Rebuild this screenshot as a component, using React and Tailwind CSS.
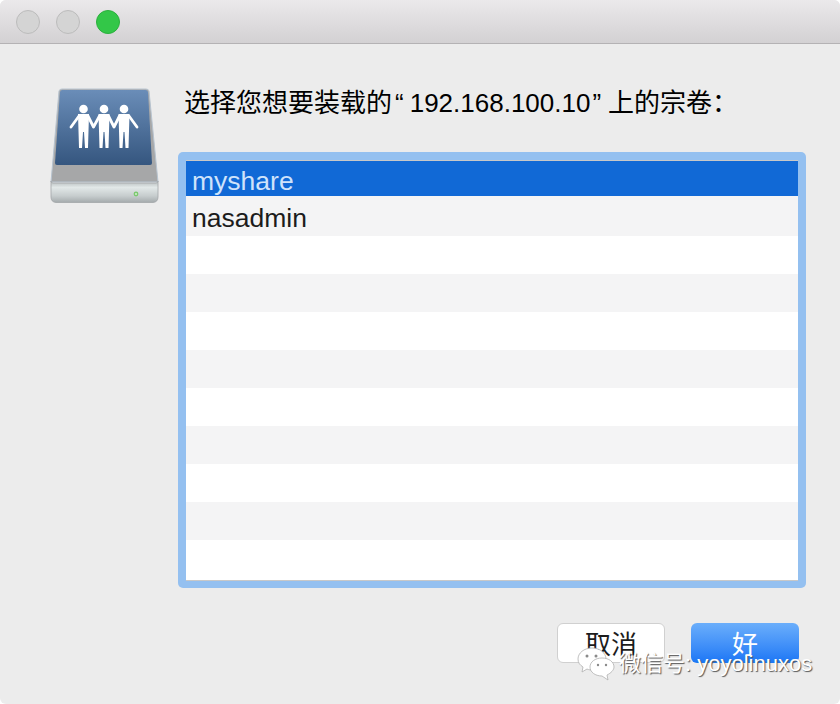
const cjk = { fontFamily: '"Liberation Sans", "Noto Sans CJK SC", sans-serif' };

const rows = ["myshare", "nasadmin", "", "", "", "", "", "", "", "", ""];

const rowClass = (i) => {
  if (i === 0) return "h-[35px] pt-[7px] px-[6px] flex items-center text-[26.5px] text-[#cfe3fb] bg-[#1169d6]";
  if (i === 1) return "h-[40px] pt-[5px] px-[6px] flex items-center text-[26.5px] text-[#1c1c1c] bg-[#f4f4f5]";
  return i % 2 === 1 ? "h-[38px] bg-[#f4f4f5]" : "h-[38px] bg-white";
};

const DriveIcon = () => (
  <svg width="110" height="120" viewBox="0 0 110 120" className="block">
    <defs>
      <linearGradient id="face" x1="0" y1="0" x2="0" y2="1">
        <stop offset="0" stopColor="#6a8db8" />
        <stop offset="1" stopColor="#35567f" />
      </linearGradient>
      <linearGradient id="front" x1="0" y1="0" x2="0" y2="1">
        <stop offset="0" stopColor="#b4babb" />
        <stop offset="0.3" stopColor="#e2e8e8" />
        <stop offset="0.7" stopColor="#c6cccd" />
        <stop offset="1" stopColor="#a4aaac" />
      </linearGradient>
    </defs>
    <path d="M9 3 Q9.500 1 12 1 H96 Q98.500 1 99 3 L108 94 H1 Z" fill="#a6a7a8" stroke="#b8c4d0" strokeWidth="1" />
    <path d="M10 4 Q10.500 2 12.500 2 H95.500 Q97.500 2 98 4 L102 75 Q102 77 100 77 H7 Q5 77 5 75 Z" fill="url(#face)" />
    <path d="M1 93 Q1 95 3 95 H106 Q108 95 108 93 V109 Q108 114 103 114.500 H6 Q1 114 1 109 Z" fill="url(#front)" stroke="#a2a6a8" strokeWidth="0.800" />
    <circle cx="86" cy="106" r="2.400" fill="#7bc96f" />
    <circle cx="86" cy="106" r="0.900" fill="#dff3da" />
    <g fill="#fff">
      <circle cx="33.500" cy="21" r="4.300" />
      <circle cx="54" cy="21" r="4.300" />
      <circle cx="74" cy="21" r="4.300" />
      <path d="M28 26 H39 L38 60 H35 L34 44 H33 L32 60 H29 Z" />
      <path d="M48.500 26 H59.500 L58.500 60 H55.500 L54.500 44 H53.500 L52.500 60 H49.500 Z" />
      <path d="M68.500 26 H79.500 L78.500 60 H75.500 L74.500 44 H73.500 L72.500 60 H69.500 Z" />
    </g>
    <path
      d="M29 28 L21 39 M38 28 L43.500 39 L49.500 28 M58.500 28 L64 39 L69.500 28 M79 28 L87 39"
      fill="none"
      stroke="#fff"
      strokeWidth="2.800"
      strokeLinecap="round"
      strokeLinejoin="round"
    />
  </svg>
);

const WechatMark = () => (
  <svg width="38" height="34" viewBox="0 0 38 34" className="block">
    <g fill="#fff" stroke="#b0b0b0" strokeWidth="0.800">
      <path d="M15 1 C7 1 1 6 1 12 C1 16 3 18 6 20 L5 25 L10 22 C12 23 14 23 16 23 C22 23 29 18 29 12 C29 6 23 1 15 1 Z" />
      <path d="M25 11 C18 11 13 15 13 20 C13 25 18 29 25 29 L31 33 L30 28 C34 26 37 23 37 20 C37 15 32 11 25 11 Z" />
    </g>
    <g fill="#8a8a8a">
      <circle cx="10" cy="9" r="1.500" />
      <circle cx="19" cy="9" r="1.500" />
      <circle cx="21" cy="18" r="1.200" />
      <circle cx="29" cy="18" r="1.200" />
    </g>
  </svg>
);

export default function App() {
  return (
    <div className="w-[840px] h-[704px] overflow-hidden bg-white">
      <div className="relative w-[840px] h-[704px] overflow-hidden rounded-[6px] bg-[#ececec]" style={cjk}>
        {/* Title bar */}
        <div className="h-[44px] flex items-center gap-4 pl-4 bg-gradient-to-b from-[#ebe9eb] to-[#d3d1d3] border-b border-[#b4b2b4]">
          <div className="w-6 h-6 rounded-full bg-[#d4d4d4] border border-[#bcbcbc]" />
          <div className="w-6 h-6 rounded-full bg-[#d4d4d4] border border-[#bcbcbc]" />
          <div className="w-6 h-6 rounded-full bg-[#33c748] border border-[#2bb03d]" />
        </div>

        {/* Body */}
        <div className="flex pl-[50px] pt-[44px]">
          <div className="w-[128px] shrink-0">
            <DriveIcon />
          </div>
          <div className="w-[628px]">
            <h1 className="text-[26px] leading-[32px] font-normal text-black -mt-[1px] ml-[6px] whitespace-nowrap">
              选择您想要装载的<span className="ml-[3px] mr-[6px]">“</span>
              <span>192.168.100.10</span>
              <span className="ml-[2px] mr-[7px]">”</span>上的宗卷：
            </h1>
            <div className="mt-[33px] h-[436px] rounded-[5px] bg-[#94c0f0] p-2">
              <div className="h-[421px] bg-white border-t border-b border-[#c8c8c8] overflow-hidden">
                {rows.map((name, i) => (
                  <div key={i} className={rowClass(i)}>
                    {name}
                  </div>
                ))}
              </div>
            </div>
          </div>
        </div>

        {/* Buttons */}
        <div className="flex justify-end gap-[26px] pr-[41px] mt-[35px]">
          <button className="w-[108px] h-[40px] pt-[3px] rounded-[6px] bg-white border border-[#d0d0d0] text-[26px] leading-none text-[#1c1c1c]">
            取消
          </button>
          <button className="w-[108px] h-[40px] pt-[3px] rounded-[6px] bg-gradient-to-b from-[#6aaefb] to-[#1a76f5] text-[26px] leading-none text-white">
            好
          </button>
        </div>

        {/* Watermark */}
        <div className="absolute left-[577px] top-[647px] flex items-center gap-[4px]">
          <WechatMark />
          <span className="text-[22px] leading-none text-white whitespace-nowrap [text-shadow:1px_1px_1px_#555]">
            微信号: yoyolinuxos
          </span>
        </div>
      </div>
    </div>
  );
}
